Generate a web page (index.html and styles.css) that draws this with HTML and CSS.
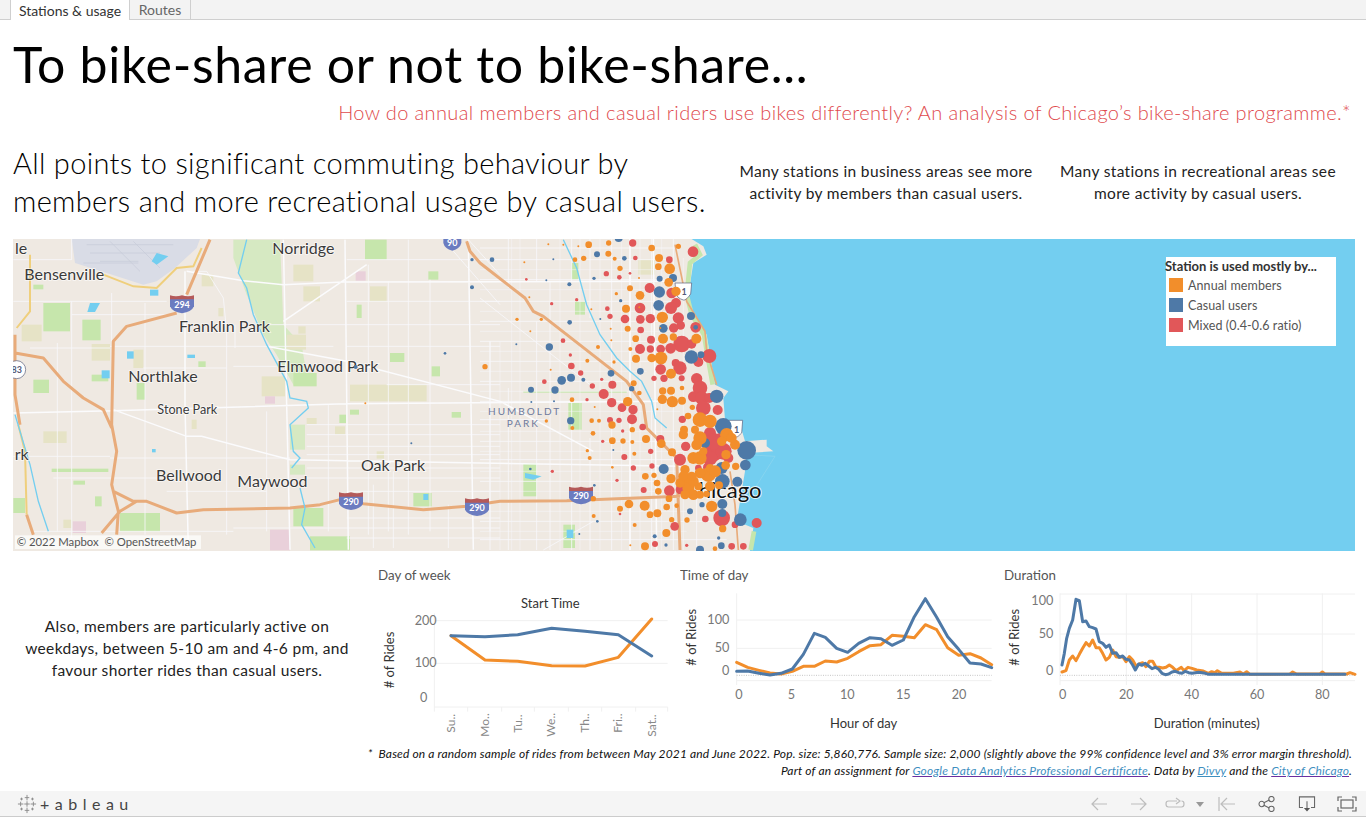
FILE: index.html
```html
<!DOCTYPE html>
<html lang="en">
<head>
<meta charset="utf-8">
<title>To bike-share or not to bike-share...</title>
<link rel="stylesheet" href="styles.css">
</head>
<body>
<nav class="tabs">
  <span class="tab tab-active">Stations &amp; usage</span>
  <span class="tab">Routes</span>
</nav>
<header class="head">
  <h1>To bike-share or not to bike-share...</h1>
  <p class="question">How do annual members and casual riders use bikes differently? An analysis of Chicago’s bike-share programme.*</p>
</header>
<section class="lead">
  <p class="lead-main">All points to significant commuting behaviour by members and more recreational usage by casual users.</p>
  <p class="lead-note note-a">Many stations in business areas see more activity by members than casual users.</p>
  <p class="lead-note note-b">Many stations in recreational areas see more activity by casual users.</p>
</section>
<section class="map">
<svg class="map-svg" viewBox="39 3 4026 936" aria-label="Map of Chicago stations">
  <rect class="land" x="0" y="0" width="4100" height="960"/>
  <path class="lake" d="M2070 0L2110 25L2120 50L2080 75L2065 170L2080 230L2120 290L2130 350L2145 440L2185 460L2170 480L2175 545L2225 575L2235 610L2300 605L2300 625L2320 640L2240 645L2235 700L2225 760L2210 850L2260 870L2250 940H4100V0Z"/>
  <path class="breakwater" d="M2240 650L2325 655L2240 790"/>
  <path class="shore-green" d="M2085 20L2100 50L2070 75L2060 170L2075 230L2112 290L2122 350L2138 440M2262 880L2252 936"/>
  <path class="airport" d="M215 3H600L590 30L525 90L470 130L430 140L320 105L225 75Z"/>
  <path class="runways" d="M260 20H520M270 45H480M300 70H415M330 10L420 100M400 10L480 90M250 75H415"/>
  <g class="forest">
    <path d="M700 5H840L850 260L905 320L925 440L880 440L830 350L790 290L740 170L700 60Z"/>
    <rect x="870" y="560" width="45" height="75"/><rect x="870" y="680" width="45" height="30"/>
  </g>
  <g class="parks">
    <rect x="130" y="195" width="80" height="85"/><rect x="247" y="245" width="55" height="62"/>
    <rect x="100" y="425" width="47" height="40"/><rect x="1095" y="5" width="65" height="60"/><rect x="1285" y="100" width="30" height="25"/>
    <rect x="1170" y="345" width="43" height="27"/><rect x="1295" y="385" width="25" height="30"/><rect x="1195" y="450" width="27" height="17"/>
    <rect x="1050" y="515" width="27" height="15"/><rect x="1018" y="530" width="20" height="25"/><rect x="1355" y="522" width="28" height="17"/>
    <rect x="595" y="370" width="22" height="17"/><rect x="40" y="780" width="35" height="45"/><rect x="285" y="775" width="20" height="30"/>
    <rect x="360" y="825" width="120" height="55"/><rect x="880" y="810" width="90" height="55"/>
    <rect x="1240" y="765" width="55" height="40"/><rect x="1070" y="200" width="15" height="40"/><rect x="275" y="410" width="50" height="20"/>
    <rect x="410" y="435" width="25" height="50"/><rect x="155" y="692" width="170" height="10"/><rect x="220" y="728" width="35" height="12"/>
    <rect x="930" y="895" width="120" height="42"/><rect x="880" y="405" width="70" height="40"/><rect x="100" y="140" width="30" height="14"/>
    <rect x="1570" y="460" width="310" height="4"/><rect x="1705" y="495" width="40" height="80"/><rect x="1715" y="75" width="20" height="50"/><rect x="1725" y="190" width="30" height="40"/>
    <rect x="1570" y="675" width="40" height="100"/><rect x="1690" y="860" width="35" height="70"/>
  </g>
  <g class="sand">
    <rect x="880" y="80" width="60" height="50"/><rect x="910" y="145" width="50" height="45"/><rect x="860" y="290" width="58" height="45"/>
    <rect x="1110" y="145" width="50" height="45"/><rect x="605" y="110" width="35" height="35"/><rect x="275" y="318" width="55" height="50"/>
    <rect x="400" y="335" width="30" height="55"/><rect x="785" y="415" width="70" height="60"/><rect x="65" y="260" width="60" height="50"/>
    <rect x="130" y="580" width="70" height="35"/><rect x="1005" y="565" width="30" height="25"/><rect x="920" y="540" width="30" height="18"/>
    <rect x="1130" y="640" width="22" height="22"/><rect x="575" y="545" width="15" height="28"/><rect x="190" y="845" width="25" height="25"/>
    <rect x="1050" y="440" width="230" height="50"/><rect x="655" y="210" width="15" height="25"/><rect x="895" y="265" width="22" height="22"/>
    <rect x="1915" y="65" width="50" height="45"/>
  </g>
  <g class="pink">
    <rect x="810" y="875" width="60" height="62"/><rect x="218" y="850" width="40" height="35"/><rect x="1067" y="100" width="30" height="28"/><rect x="795" y="475" width="30" height="22"/>
  </g>
  <path class="minor" d="M172 315V880M215 3V65M215 190V900M335 165V310M435 195V890M680 280V890M705 260V330M800 520V880M985 500V880M1105 80V890M1165 130V880M1225 5V890M1290 125V880M1470 310V880M1345 800V930M1180 700V930M1120 740V930M40 65H215M40 190H500M215 230H510M90 330H330M330 325H1000M700 385H830M430 390H680M40 655H330M330 660H870M160 720H500M500 760H800M920 560H1500M920 590H1500M920 625H1500M920 720H1500M700 870H1500M100 880H700M1040 65H1500M1040 190H1500M1040 260H1500M800 260H1040M1040 325H1500M1160 440H1500M1040 760H1500M580 100H620L670 180L680 280M1405 5L1500 110M1330 5L1500 200M1040 840H1500M1040 900H1500M920 650H1500M920 690H1500"/>
  <g transform="translate(1440 0)">
    <path class="minor" d="M30 310V936M85 0V150M85 450V936M170 0V130M170 250V936M210 130V936M275 0V130M275 490V936M330 0V240M330 600V936M395 0V500M395 560V936M450 0V400M450 670V936M515 0V300M515 480V936M580 0V100M580 460V936M650 700V936M0 30H600M0 65H580M0 125H580M0 190H570M0 250H570M0 310H560M0 370H510M0 430H460M0 490H560M0 545H200M0 610H620M0 665H620M0 730H600M0 850H740M0 905H740M340 850L190 936M0 180L330 440"/>
    <path class="minor-thin" d="M60 310V936M120 0V936M240 0V936M300 0V936M360 0V936M425 0V936M480 0V936M545 0V936M610 60V936M95 0V936M0 95H590M0 155H580M0 220H570M0 280H570M0 340H560M0 400H500M0 460H470M0 520H600M0 580H620M0 640H620M0 700H620M0 760H620M0 820H620M0 880H620"/>
  </g>
  <path class="major" d="M560 100L730 128L850 140L1030 132L2000 130M40 525L340 518L1040 497L2020 490M340 515L560 595L605 595L870 665L1040 668L2050 685M555 100L555 500L565 935M850 5L860 500L870 935M1035 5L1045 935M1405 5L1420 935M1100 80L850 250M800 325L1040 370L1500 490L1780 640M1890 0V936M1960 0L1970 936"/>
  <path class="yellow" d="M90 50V220L50 270M310 110L400 145L470 150L530 90L580 85L605 30M55 560L75 640L80 830"/>
  <path class="highway" d="M630 5L560 170M530 225L380 265L340 310L335 560L350 640L335 740L355 820L350 890M340 760L400 790L440 790L530 825L610 815L870 810L960 800L1020 785L1090 797L1270 815L1400 805L1500 790L1700 788L2040 775M45 345L130 360L190 430L250 480L310 515L335 570M45 290V470L60 560M80 830L100 890M305 885L360 820L410 790M1400 10L1410 40L1440 75L1575 180L1600 220L1630 235L1880 430L1930 500L1940 570L2030 660L2040 936"/>
  <path class="shore-road" d="M2025 20L2060 190L2115 280L2120 340L2150 440M2190 700L2205 800L2215 936"/>
  <g class="rivers">
    <path d="M740 5L715 105L740 150L760 230L800 320L860 430L870 480L920 490L925 510L870 560L880 640L900 660L875 690M900 750L915 810L905 860L945 930M45 530L90 680L115 790L145 880"/>
    <path d="M1690 5L1730 90L1760 200L1800 290L1850 360L1890 400L1925 430L1955 490L1965 540L2000 570"/>
  </g>
  <g class="water">
    <path d="M470 45L505 55L470 80L455 70Z"/><rect x="450" y="155" width="25" height="18"/><path d="M270 195L300 195L285 222H262Z"/>
    <rect x="381" y="340" width="20" height="22"/><rect x="305" y="397" width="24" height="24"/><rect x="562" y="350" width="23" height="10"/><rect x="456" y="633" width="11" height="10"/>
    <rect x="1270" y="768" width="15" height="18"/><path d="M1575 705L1625 715L1600 725L1575 720Z"/><rect x="1700" y="875" width="20" height="25"/>
  </g>
  <g class="map-label">
    <text x="45" y="47">le</text><text x="73" y="127">Bensenville</text><text x="817" y="47">Norridge</text>
    <text x="537" y="281">Franklin Park</text><text x="832" y="403">Elmwood Park</text><text x="385" y="431">Northlake</text>
    <text class="label-small" x="472" y="528">Stone Park</text><text x="44" y="666">rk</text><text x="468" y="729">Bellwood</text>
    <text x="712" y="747">Maywood</text><text x="1083" y="699">Oak Park</text>
  </g>
  <g class="hood"><text x="1464" y="530">HUMBOLDT</text><text x="1520" y="568">PARK</text></g>
  <text class="city" x="2052" y="780">Chicago</text>
  <g class="inter">
    <path class="shield" d="M510 180H582V205Q575 222 546 226Q517 222 510 205Z"/><path class="shield-top" d="M510 172Q528 178 546 172Q564 178 582 172V184H510Z"/><text x="546" y="211">294</text>
    <path class="shield" d="M1017 772H1089V797Q1082 812 1053 816Q1024 812 1017 797Z"/><path class="shield-top" d="M1017 763Q1035 769 1053 763Q1071 769 1089 763V776H1017Z"/><text x="1053" y="801">290</text>
    <path class="shield" d="M1395 790H1467V815Q1460 830 1431 834Q1402 830 1395 815Z"/><path class="shield-top" d="M1395 781Q1413 787 1431 781Q1449 787 1467 781V794H1395Z"/><text x="1431" y="819">290</text>
    <path class="shield" d="M1707 755H1779V780Q1772 795 1743 799Q1714 795 1707 780Z"/><path class="shield-top" d="M1707 746Q1725 752 1743 746Q1761 752 1779 746V759H1707Z"/><text x="1743" y="784">290</text>
    <path class="shield" d="M1330 3H1384V15Q1380 32 1357 38Q1334 32 1330 15Z"/><text x="1357" y="24">90</text>
  </g>
  <g class="us">
    <circle cx="50" cy="395" r="27"/><text x="50" y="406">83</text>
    <path d="M2025 135H2075L2072 168Q2058 188 2050 186Q2030 180 2028 165Z"/><text x="2052" y="170">1</text>
    <path d="M2185 547H2228L2225 585Q2212 600 2205 598Q2188 592 2186 580Z"/><text x="2210" y="584">1</text>
  </g>
  <g transform="translate(1440 0)">
    <g class="r">
      <circle cx="458" cy="15" r="11"/><circle cx="639" cy="41" r="16"/><circle cx="568" cy="65" r="10"/><circle cx="466" cy="60" r="7"/><circle cx="379" cy="107" r="8"/><circle cx="418" cy="118" r="7"/><circle cx="450" cy="106" r="4"/><circle cx="139" cy="124" r="4"/><circle cx="509" cy="150" r="15"/><circle cx="575" cy="165" r="16"/><circle cx="588" cy="195" r="15"/><circle cx="573" cy="210" r="18"/><circle cx="480" cy="210" r="16"/><circle cx="290" cy="185" r="5"/><circle cx="215" cy="197" r="5"/><circle cx="382" cy="212" r="7"/><circle cx="390" cy="235" r="8"/><circle cx="435" cy="243" r="13"/><circle cx="481" cy="244" r="13"/><circle cx="511" cy="242" r="14"/><circle cx="595" cy="240" r="17"/><circle cx="602" cy="262" r="13"/><circle cx="581" cy="270" r="14"/><circle cx="647" cy="268" r="16"/><circle cx="482" cy="276" r="10"/><circle cx="513" cy="305" r="12"/><circle cx="605" cy="318" r="25"/><circle cx="635" cy="318" r="14"/><circle cx="480" cy="333" r="15"/><circle cx="511" cy="333" r="11"/><circle cx="542" cy="333" r="13"/><circle cx="572" cy="331" r="16"/><circle cx="688" cy="354" r="21"/><circle cx="655" cy="372" r="15"/><circle cx="249" cy="308" r="7"/><circle cx="271" cy="351" r="5"/><circle cx="274" cy="384" r="10"/><circle cx="302" cy="405" r="8"/><circle cx="193" cy="431" r="7"/><circle cx="587" cy="375" r="12"/><circle cx="600" cy="390" r="20"/><circle cx="542" cy="394" r="16"/><circle cx="522" cy="421" r="8"/><circle cx="552" cy="421" r="11"/><circle cx="605" cy="421" r="9"/><circle cx="650" cy="422" r="17"/><circle cx="660" cy="450" r="22"/><circle cx="640" cy="476" r="16"/><circle cx="665" cy="480" r="20"/><circle cx="688" cy="480" r="15"/><circle cx="365" cy="424" r="5"/><circle cx="397" cy="440" r="12"/><circle cx="337" cy="444" r="8"/><circle cx="371" cy="468" r="15"/><circle cx="321" cy="485" r="5"/><circle cx="395" cy="494" r="14"/><circle cx="426" cy="509" r="13"/><circle cx="459" cy="515" r="14"/><circle cx="456" cy="544" r="15"/><circle cx="713" cy="516" r="15"/><circle cx="670" cy="510" r="22"/><circle cx="390" cy="546" r="9"/><circle cx="417" cy="547" r="8"/><circle cx="488" cy="567" r="10"/><circle cx="607" cy="544" r="11"/><circle cx="428" cy="579" r="5"/><circle cx="368" cy="610" r="5"/><circle cx="541" cy="603" r="12"/><circle cx="617" cy="625" r="14"/><circle cx="690" cy="585" r="18"/><circle cx="700" cy="640" r="30"/><circle cx="730" cy="640" r="25"/><circle cx="680" cy="620" r="15"/><circle cx="512" cy="640" r="8"/><circle cx="600" cy="665" r="18"/><circle cx="433" cy="657" r="9"/><circle cx="460" cy="690" r="8"/><circle cx="516" cy="684" r="8"/><circle cx="655" cy="690" r="10"/><circle cx="684" cy="688" r="15"/><circle cx="217" cy="700" r="5"/><circle cx="411" cy="727" r="5"/><circle cx="568" cy="758" r="16"/><circle cx="601" cy="755" r="14"/><circle cx="491" cy="756" r="9"/><circle cx="725" cy="840" r="25"/><circle cx="584" cy="865" r="13"/><circle cx="830" cy="855" r="15"/><circle cx="676" cy="843" r="10"/><circle cx="765" cy="860" r="10"/><circle cx="420" cy="828" r="4"/><circle cx="755" cy="925" r="10"/><circle cx="790" cy="925" r="10"/><circle cx="620" cy="922" r="5"/><circle cx="525" cy="918" r="9"/>
      <circle cx="700" cy="610" r="25"/><circle cx="720" cy="600" r="15"/><circle cx="670" cy="650" r="15"/><circle cx="745" cy="660" r="15"/><circle cx="690" cy="660" r="22"/>
    </g>
    <g class="b">
      <circle cx="416" cy="0" r="12"/><circle cx="351" cy="49" r="9"/><circle cx="36" cy="65" r="7"/><circle cx="220" cy="64" r="3"/><circle cx="433" cy="61" r="7"/><circle cx="539" cy="122" r="9"/><circle cx="342" cy="121" r="5"/><circle cx="199" cy="127" r="3"/><circle cx="268" cy="139" r="6"/><circle cx="579" cy="120" r="12"/><circle cx="538" cy="162" r="17"/><circle cx="536" cy="202" r="16"/><circle cx="422" cy="188" r="5"/><circle cx="633" cy="234" r="12"/><circle cx="361" cy="243" r="3"/><circle cx="269" cy="253" r="7"/><circle cx="550" cy="271" r="13"/><circle cx="647" cy="268" r="7"/><circle cx="109" cy="319" r="3"/><circle cx="208" cy="327" r="11"/><circle cx="634" cy="357" r="20"/><circle cx="663" cy="350" r="10"/><circle cx="481" cy="400" r="10"/><circle cx="393" cy="406" r="10"/><circle cx="245" cy="427" r="13"/><circle cx="273" cy="419" r="12"/><circle cx="310" cy="425" r="6"/><circle cx="225" cy="456" r="11"/><circle cx="153" cy="455" r="9"/><circle cx="455" cy="452" r="8"/><circle cx="710" cy="475" r="20"/><circle cx="154" cy="492" r="3"/><circle cx="222" cy="490" r="3"/><circle cx="272" cy="548" r="11"/><circle cx="730" cy="565" r="25"/><circle cx="800" cy="637" r="28"/><circle cx="400" cy="636" r="3"/><circle cx="675" cy="615" r="15"/><circle cx="151" cy="693" r="4"/><circle cx="551" cy="693" r="15"/><circle cx="796" cy="681" r="16"/><circle cx="725" cy="690" r="18"/><circle cx="727" cy="730" r="22"/><circle cx="772" cy="731" r="15"/><circle cx="343" cy="742" r="4"/><circle cx="727" cy="798" r="15"/><circle cx="666" cy="800" r="8"/><circle cx="630" cy="820" r="9"/><circle cx="727" cy="825" r="12"/><circle cx="781" cy="845" r="19"/><circle cx="352" cy="850" r="4"/><circle cx="298" cy="888" r="3"/><circle cx="524" cy="895" r="6"/><circle cx="558" cy="921" r="5"/><circle cx="716" cy="900" r="5"/><circle cx="724" cy="923" r="10"/><circle cx="660" cy="935" r="12"/>
      <circle cx="-24" cy="148" r="6"/><circle cx="-105" cy="346" r="4"/><circle cx="-373" cy="387" r="6"/><circle cx="-206" cy="616" r="3"/><circle cx="-24" cy="65" r="5"/>
    </g>
    <g class="o">
      <circle cx="205" cy="19" r="3"/><circle cx="250" cy="20" r="3"/><circle cx="295" cy="25" r="3"/><circle cx="326" cy="20" r="10"/><circle cx="386" cy="15" r="8"/><circle cx="385" cy="47" r="9"/><circle cx="515" cy="30" r="10"/><circle cx="595" cy="25" r="8"/><circle cx="311" cy="61" r="8"/><circle cx="285" cy="65" r="7"/><circle cx="404" cy="62" r="6"/><circle cx="537" cy="60" r="12"/><circle cx="420" cy="91" r="8"/><circle cx="133" cy="73" r="3"/><circle cx="477" cy="120" r="3"/><circle cx="535" cy="86" r="10"/><circle cx="569" cy="92" r="16"/><circle cx="566" cy="133" r="13"/><circle cx="588" cy="160" r="14"/><circle cx="450" cy="151" r="9"/><circle cx="409" cy="167" r="5"/><circle cx="480" cy="172" r="13"/><circle cx="148" cy="178" r="3"/><circle cx="438" cy="212" r="12"/><circle cx="478" cy="208" r="3"/><circle cx="334" cy="214" r="3"/><circle cx="547" cy="238" r="17"/><circle cx="184" cy="244" r="5"/><circle cx="111" cy="244" r="5"/><circle cx="392" cy="272" r="3"/><circle cx="443" cy="272" r="9"/><circle cx="541" cy="270" r="3"/><circle cx="151" cy="280" r="3"/><circle cx="467" cy="302" r="10"/><circle cx="549" cy="302" r="15"/><circle cx="580" cy="297" r="11"/><circle cx="394" cy="307" r="3"/><circle cx="354" cy="327" r="6"/><circle cx="649" cy="302" r="15"/><circle cx="451" cy="333" r="6"/><circle cx="468" cy="362" r="12"/><circle cx="515" cy="360" r="13"/><circle cx="543" cy="360" r="19"/><circle cx="322" cy="368" r="6"/><circle cx="402" cy="372" r="5"/><circle cx="15" cy="386" r="8"/><circle cx="212" cy="395" r="3"/><circle cx="573" cy="407" r="15"/><circle cx="461" cy="436" r="9"/><circle cx="548" cy="459" r="11"/><circle cx="573" cy="458" r="12"/><circle cx="606" cy="450" r="7"/><circle cx="478" cy="465" r="7"/><circle cx="547" cy="484" r="14"/><circle cx="577" cy="491" r="17"/><circle cx="606" cy="488" r="12"/><circle cx="276" cy="485" r="7"/><circle cx="443" cy="491" r="14"/><circle cx="637" cy="508" r="8"/><circle cx="344" cy="507" r="3"/><circle cx="532" cy="514" r="3"/><circle cx="624" cy="534" r="10"/><circle cx="660" cy="545" r="22"/><circle cx="690" cy="550" r="20"/><circle cx="199" cy="549" r="5"/><circle cx="335" cy="548" r="7"/><circle cx="357" cy="548" r="6"/><circle cx="396" cy="561" r="11"/><circle cx="612" cy="575" r="12"/><circle cx="277" cy="570" r="6"/><circle cx="610" cy="590" r="14"/><circle cx="457" cy="575" r="8"/><circle cx="660" cy="600" r="20"/><circle cx="740" cy="590" r="20"/><circle cx="765" cy="620" r="15"/><circle cx="339" cy="586" r="7"/><circle cx="498" cy="603" r="12"/><circle cx="397" cy="608" r="10"/><circle cx="429" cy="609" r="8"/><circle cx="457" cy="612" r="6"/><circle cx="544" cy="617" r="13"/><circle cx="576" cy="643" r="12"/><circle cx="322" cy="638" r="5"/><circle cx="329" cy="660" r="6"/><circle cx="640" cy="660" r="18"/><circle cx="660" cy="660" r="20"/><circle cx="738" cy="650" r="14"/><circle cx="463" cy="647" r="6"/><circle cx="767" cy="685" r="11"/><circle cx="737" cy="682" r="13"/><circle cx="397" cy="688" r="4"/><circle cx="615" cy="695" r="14"/><circle cx="620" cy="725" r="20"/><circle cx="685" cy="710" r="22"/><circle cx="496" cy="715" r="10"/><circle cx="522" cy="712" r="8"/><circle cx="573" cy="722" r="14"/><circle cx="717" cy="742" r="12"/><circle cx="531" cy="735" r="10"/><circle cx="625" cy="750" r="18"/><circle cx="655" cy="745" r="12"/><circle cx="690" cy="745" r="15"/><circle cx="535" cy="760" r="10"/><circle cx="340" cy="782" r="8"/><circle cx="567" cy="782" r="10"/><circle cx="447" cy="798" r="13"/><circle cx="420" cy="812" r="9"/><circle cx="494" cy="803" r="15"/><circle cx="560" cy="807" r="10"/><circle cx="590" cy="803" r="7"/><circle cx="695" cy="805" r="17"/><circle cx="510" cy="830" r="10"/><circle cx="532" cy="826" r="12"/><circle cx="341" cy="834" r="6"/><circle cx="575" cy="845" r="8"/><circle cx="621" cy="846" r="8"/><circle cx="464" cy="861" r="6"/><circle cx="559" cy="885" r="12"/><circle cx="728" cy="872" r="11"/><circle cx="451" cy="922" r="3"/><circle cx="495" cy="925" r="12"/><circle cx="705" cy="932" r="7"/>
      <circle cx="-344" cy="496" r="3"/>
      <circle cx="640" cy="770" r="16"/><circle cx="615" cy="770" r="14"/><circle cx="660" cy="770" r="12"/><circle cx="600" cy="735" r="14"/><circle cx="680" cy="768" r="10"/><circle cx="640" cy="730" r="16"/><circle cx="650" cy="620" r="16"/><circle cx="670" cy="640" r="12"/><circle cx="645" cy="575" r="12"/><circle cx="755" cy="600" r="15"/><circle cx="725" cy="610" r="14"/><circle cx="660" cy="705" r="16"/><circle cx="690" cy="690" r="12"/><circle cx="610" cy="715" r="15"/><circle cx="635" cy="715" r="14"/><circle cx="705" cy="700" r="18"/>
    </g>
  </g>
  <rect class="credit-bg" x="45" y="892" width="558" height="41"/>
  <text class="credit" x="50" y="924">© 2022 Mapbox  © OpenStreetMap</text>
</svg>
<aside class="legend">
  <div class="legend-title">Station is used mostly by...</div>
  <div class="legend-row"><span class="swatch swatch-o"></span>Annual members</div>
  <div class="legend-row"><span class="swatch swatch-b"></span>Casual users</div>
  <div class="legend-row"><span class="swatch swatch-r"></span>Mixed (0.4-0.6 ratio)</div>
</aside>
</section>
<section class="bottom">
  <p class="bottom-text">Also, members are particularly active on weekdays, between 5-10 am and 4-6 pm, and favour shorter rides than casual users.</p>
  <svg class="chart chart-a" viewBox="0 0 930 540">
    <text class="c-title" x="24" y="61">Day of week</text>
    <text class="c-head" x="541" y="143">Start Time</text>
    <path class="c-grid" d="M193 182H893M193 310H893M193 441H893M193 160V455M293 441V455M395 441V455M493 441V455M595 441V455M695 441V455M797 441V455M893 441V455"/>
    <text class="c-tick" x="200" y="195" text-anchor="end">200</text><text class="c-tick" x="200" y="322" text-anchor="end">100</text><text class="c-tick" x="172" y="425" text-anchor="end">0</text>
    <text class="c-axis" transform="translate(72 300) rotate(-90)"># of Rides</text>
    <g class="c-cat">
      <text transform="translate(255 518) rotate(-90)">Su..</text><text transform="translate(356 530) rotate(-90)">Mo..</text><text transform="translate(455 518) rotate(-90)">Tu..</text><text transform="translate(556 530) rotate(-90)">We..</text><text transform="translate(656 518) rotate(-90)">Th..</text><text transform="translate(757 518) rotate(-90)">Fri..</text><text transform="translate(858 530) rotate(-90)">Sat..</text>
    </g>
    <polyline class="l-o" points="243,227 345,300 443,304 545,317 645,318 745,292 845,177"/>
    <polyline class="l-b" points="243,227 345,230 443,224 545,205 645,214 745,224 845,288"/>
  </svg>
  <svg class="chart chart-b" viewBox="0 0 990 540">
    <text class="c-title" x="0" y="61">Time of day</text>
    <path class="c-grid" d="M170 180H935M170 265H935M170 362H935M170 100V375"/>
    <path class="c-zero" d="M170 346H935"/>
    <text class="c-tick" x="148" y="193" text-anchor="end">100</text><text class="c-tick" x="148" y="277" text-anchor="end">50</text><text class="c-tick" x="148" y="345" text-anchor="end">0</text>
    <text class="c-tick" x="177" y="418" text-anchor="middle">0</text><text class="c-tick" x="334" y="418" text-anchor="middle">5</text><text class="c-tick" x="502" y="418" text-anchor="middle">10</text><text class="c-tick" x="670" y="418" text-anchor="middle">15</text><text class="c-tick" x="837" y="418" text-anchor="middle">20</text>
    <text class="c-axis" transform="translate(48 232) rotate(-90)"># of Rides</text>
    <text class="c-axis" x="551" y="503">Hour of day</text>
    <polyline class="l-o" points="170,307 203,322 237,331 270,339 303,342 337,334 370,319 403,319 436,303 470,306 503,295 536,275 570,257 603,254 636,226 670,229 703,233 736,194 770,209 803,263 836,286 870,281 903,294 935,314"/>
    <polyline class="l-b" points="170,334 203,333 237,340 270,345 303,340 337,327 370,283 403,220 436,232 470,265 503,277 536,250 570,233 603,236 636,256 670,240 703,170 736,116 770,172 803,230 836,268 870,309 903,312 935,323"/>
  </svg>
  <svg class="chart chart-c" viewBox="0 0 1098 540">
    <text class="c-title" x="12" y="61">Duration</text>
    <path class="c-grid" d="M180 102H1065M180 222H1065M180 362H1065M180 100V375M379 100V375M575 100V375M771 100V375M967 100V375"/>
    <path class="c-zero" d="M180 346H1065"/>
    <text class="c-tick" x="160" y="136" text-anchor="end">100</text><text class="c-tick" x="160" y="235" text-anchor="end">50</text><text class="c-tick" x="160" y="345" text-anchor="end">0</text>
    <text class="c-tick" x="188" y="418" text-anchor="middle">0</text><text class="c-tick" x="379" y="418" text-anchor="middle">20</text><text class="c-tick" x="575" y="418" text-anchor="middle">40</text><text class="c-tick" x="771" y="418" text-anchor="middle">60</text><text class="c-tick" x="967" y="418" text-anchor="middle">80</text>
    <text class="c-axis" transform="translate(58 232) rotate(-90)"># of Rides</text>
    <text class="c-axis" x="620" y="503">Duration (minutes)</text>
    <polyline class="l-o" points="186,336 198,332 208,300 218,288 228,302 238,283 248,265 258,248 268,258 278,240 288,263 298,263 308,280 318,300 328,292 338,270 348,290 358,292 368,290 378,305 388,290 398,300 408,318 418,312 428,308 438,320 448,304 458,304 468,322 478,322 488,324 498,322 508,315 518,322 528,332 544,322 552,332 564,322 576,325 590,330 610,333 625,340 635,335 645,338 652,332 665,340 700,340 720,336 730,342 740,335 750,343 870,342 878,336 890,342 960,342 967,336 975,342 1040,342 1050,338 1065,343"/>
    <polyline class="l-b" points="186,315 193,280 200,235 208,205 218,180 228,118 238,122 248,185 258,183 268,200 278,203 288,207 298,245 308,250 318,262 328,255 338,280 348,278 358,292 368,288 378,298 388,300 398,315 406,330 416,312 426,316 436,310 446,318 456,326 466,322 476,328 486,340 496,344 506,342 516,336 526,334 536,338 546,340 556,334 566,338 576,340 596,337 616,340 626,343 1035,343"/>
  </svg>
</section>
<section class="notes">
  <p>* &nbsp;Based on a random sample of rides from between May 2021 and June 2022. Pop. size: 5,860,776. Sample size: 2,000 (slightly above the 99% confidence level and 3% error margin threshold).</p>
  <p>Part of an assignment for <a class="link link-visited" href="#">Google Data Analytics Professional Certificate</a>. Data by <a class="link" href="#">Divvy</a> and the <a class="link link-visited" href="#">City of Chicago</a>.</p>
</section>
<footer class="toolbar">
  <div class="brand">
    <svg class="brand-mark" viewBox="0 0 22 22"><path d="M11 1V7M8.500 4H13.500M11 15V21M8.500 18H13.500M1 11H7M4 8.500V13.500M15 11H21M18 8.500V13.500M11 8V14M8 11H14M5 4V7M3.500 5.500H6.500M17 4V7M15.500 5.500H18.500M5 15V18M3.500 16.500H6.500M17 15V18M15.500 16.500H18.500"/></svg>
    <span class="brand-word">+ableau</span>
  </div>
  <div class="tools">
    <svg class="tool tool-back" viewBox="0 0 20 16"><path d="M18 8H3M9 2L3 8L9 14"/></svg>
    <svg class="tool tool-forward" viewBox="0 0 20 16"><path d="M2 8H17M11 2L17 8L11 14"/></svg>
    <svg class="tool tool-redo" viewBox="0 0 20 16"><path d="M12 5H3.500Q1 5 1 8T3.500 11H16.500Q19 11 19 8T16.500 5M11 2L15 5L11 8"/></svg>
    <svg class="tool tool-caret" viewBox="0 0 8 16"><path class="solid" d="M0 6H8L4 11Z"/></svg>
    <svg class="tool tool-first" viewBox="0 0 20 16"><path d="M2 1V15M18 8H4M10 2L4 8L10 14"/></svg>
    <svg class="tool tool-dark" viewBox="0 0 20 18"><circle cx="4" cy="9" r="3"/><circle cx="15" cy="3.500" r="3"/><circle cx="15" cy="14.500" r="3"/><path d="M6.500 7.500L12.500 4.500M6.500 10.500L12.500 13.500"/></svg>
    <svg class="tool tool-dark" viewBox="0 0 20 18"><path d="M5.500 13H1.500V1H18.500V13H14.500M10 6V15"/><path class="solid" d="M6.500 13.500H13.500L10 17.500Z"/></svg>
    <svg class="tool tool-dark" viewBox="0 0 20 16"><path d="M1 5V1H5M15 1H19V5M19 11V15H15M5 15H1V11"/><rect x="4" y="4" width="12" height="8"/></svg>
  </div>
</footer>
</body>
</html>
```
FILE: styles.css
```css
* { box-sizing: border-box; }
html, body { margin: 0; padding: 0; }
body { width: 1366px; height: 818px; overflow: hidden; background: #fff; color: #000; font-family: Lato, "Open Sans", sans-serif; }
p, h1 { margin: 0; }

.tabs { display: flex; height: 20px; padding-left: 10px; background: #f3f3f3; border-bottom: 1px solid #cfcfcf; }
.tab { display: flex; align-items: center; justify-content: center; width: 61px; height: 19px; font-size: 14px; color: #666; border-right: 1px solid #cfcfcf; white-space: nowrap; }
.tab-active { height: 20px; width: 120px; color: #333; background: #fff; border-left: 1px solid #cfcfcf; }

.head { height: 105px; padding: 0 15px 0 13px; }
h1 { height: 81px; padding-top: 9px; font-size: 50px; line-height: 70px; font-weight: 400; letter-spacing: .67px; }
.question { text-align: right; font-size: 20px; line-height: 22px; font-weight: 300; letter-spacing: .38px; color: #e04a4d; }

.lead { display: flex; height: 114px; padding-left: 13px; }
.lead-main { width: 700px; padding-top: 19px; font-size: 29px; line-height: 38px; font-weight: 300; letter-spacing: .31px; }
.lead-note { padding-top: 35px; text-align: center; font-size: 15.500px; line-height: 22px; letter-spacing: .35px; color: #222; }
.note-a { width: 320px; margin-left: 13px; }
.note-b { width: 300px; margin-left: 2px; }

.map { position: relative; width: 1342px; height: 312px; margin-left: 13px; }
.map-svg { display: block; width: 1342px; height: 312px; }
.land { fill: #efe9e2; }
.lake { fill: #73cef0; }
.breakwater { fill: none; stroke: #8fd6ee; stroke-width: 2; }
.shore-green { fill: none; stroke: #c6e6ac; stroke-width: 14; }
.airport { fill: #d9dce6; }
.runways { fill: none; stroke: #c6cad8; stroke-width: 2; }
.forest { fill: #d6e9c2; }
.parks { fill: #c6e6ac; }
.sand { fill: #e6e3c6; }
.pink { fill: #e9d0da; }
.minor { fill: none; stroke: #f8f8fb; stroke-width: 2.500; }
.minor-thin { fill: none; stroke: #f6f6fa; stroke-width: 1.500; }
.major { fill: none; stroke: #fbfbfd; stroke-width: 4.500; }
.yellow { fill: none; stroke: #efcf7c; stroke-width: 6; }
.highway { fill: none; stroke: #e8ab7a; stroke-width: 9; stroke-linejoin: round; }
.shore-road { fill: none; stroke: #e8ab7a; stroke-width: 5; }
.rivers { fill: none; stroke: #73cef0; stroke-width: 4; }
.water { fill: #73cef0; }
.map-label text { font-size: 48px; fill: #3a3a3a; stroke: #fff; stroke-width: 5; paint-order: stroke; stroke-opacity: .7; }
.map-label .label-small { font-size: 38px; }
.hood text { font-size: 30px; letter-spacing: 6px; fill: #6d7a9c; }
.city { font-size: 66px; fill: #111; stroke: #fff; stroke-width: 6; paint-order: stroke; stroke-opacity: .8; }
.shield { fill: #6b7cc0; }
.shield-top { fill: #b45a5a; }
.inter text { font-size: 27px; font-weight: 700; fill: #fff; text-anchor: middle; }
.us circle, .us path { fill: #fff; stroke: #555a78; stroke-width: 2; }
.us text { font-size: 27px; font-weight: 700; fill: #555a78; text-anchor: middle; }
.r { fill: #e15759; }
.b { fill: #4e79a7; }
.o { fill: #f28e2b; }
.credit-bg { fill: #fff; fill-opacity: .7; }
.credit { font-size: 34px; fill: #555; white-space: pre; }

.legend { position: absolute; left: 1153px; top: 18px; width: 170px; height: 89px; background: #fff; }
.legend-title { height: 18px; margin-left: -1px; font-size: 13px; line-height: 18px; font-weight: 700; color: #333; white-space: nowrap; }
.legend-row { display: flex; align-items: center; gap: 5px; height: 20px; padding-left: 3px; font-size: 12.500px; letter-spacing: .1px; color: #555; }
.swatch { width: 14px; height: 14px; }
.swatch-o { background: #f28e2b; }
.swatch-b { background: #4e79a7; }
.swatch-r { background: #e15759; }

.bottom { display: flex; height: 194px; padding-top: 9px; }
.bottom-text { flex: none; width: 370px; padding: 55px 20px 0 24px; text-align: center; font-size: 15.500px; line-height: 22px; letter-spacing: .35px; color: #222; }
.chart { display: block; height: 180px; flex: none; }
.chart-a { width: 310px; }
.chart-b { width: 330px; margin-right: -10px; }
.chart-c { width: 366px; }
.c-title { font-size: 40px; fill: #555; }
.c-head { font-size: 39px; fill: #333; text-anchor: middle; font-weight: 400; }
.c-grid { fill: none; stroke: #f0f0f0; stroke-width: 3; }
.c-zero { fill: none; stroke: #bbb; stroke-width: 2.500; stroke-dasharray: 3 4; }
.c-tick { font-size: 38px; fill: #777; }
.c-cat text { font-size: 36px; fill: #888; }
.c-axis { font-size: 39px; fill: #333; text-anchor: middle; }
.l-o, .l-b { fill: none; stroke-width: 9; stroke-linejoin: round; stroke-linecap: round; }
.l-o { stroke: #f28e2b; }
.l-b { stroke: #4e79a7; }

.notes { height: 46px; padding-right: 14px; text-align: right; font-size: 12px; line-height: 17px; letter-spacing: .16px; font-style: italic; color: #111; }
.link { color: #3f8fbf; text-decoration: underline; text-decoration-color: #3f8fbf; }
.link-visited { text-decoration-color: #6a2fa0; }

.toolbar { display: flex; justify-content: space-between; align-items: center; height: 26px; background: #f5f5f5; border-bottom: 1px solid #ccc; }
.brand { display: flex; align-items: center; gap: 3px; padding-left: 17px; }
.brand-mark { width: 20px; height: 20px; fill: none; stroke: #888; stroke-width: 1; }
.brand-word { font-size: 16px; letter-spacing: 5.500px; color: #444; font-weight: 400; }
.tools { display: flex; align-items: center; padding-right: 9px; }
.tool { width: 20px; height: 16px; margin-left: 20px; fill: none; stroke: #bdbdbd; stroke-width: 1.200; }
.tool-forward { margin-left: 20px; }
.tool-redo { margin-left: 16px; }
.tool-caret { width: 8px; margin-left: 11px; }
.tool-first { margin-left: 13px; }
.tool-dark { stroke: #666; }
.solid { stroke: none; fill: #999; }
.tool-dark .solid { fill: #555; }
```
